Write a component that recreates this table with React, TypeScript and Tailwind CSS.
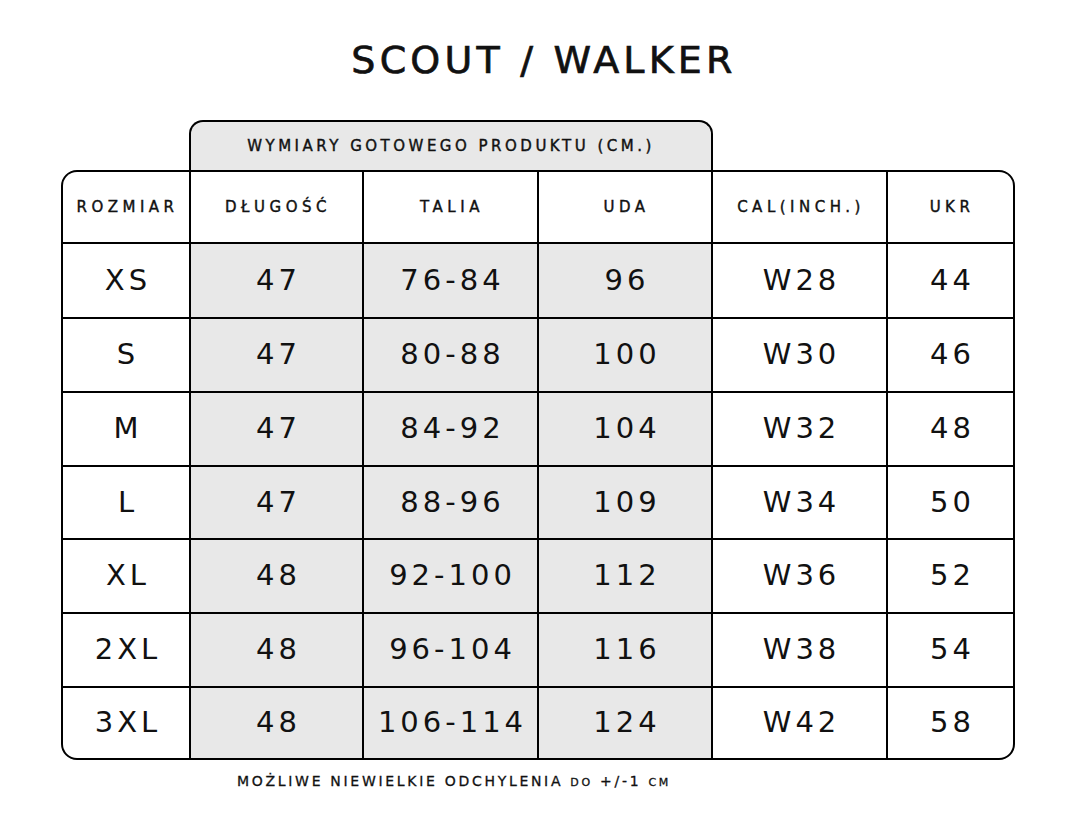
import React from "react";

const rows = [
  ["XS", "47", "76-84", "96", "W28", "44"],
  ["S", "47", "80-88", "100", "W30", "46"],
  ["M", "47", "84-92", "104", "W32", "48"],
  ["L", "47", "88-96", "109", "W34", "50"],
  ["XL", "48", "92-100", "112", "W36", "52"],
  ["2XL", "48", "96-104", "116", "W38", "54"],
  ["3XL", "48", "106-114", "124", "W42", "58"],
];

const headers = ["ROZMIAR", "DŁUGOŚĆ", "TALIA", "UDA", "CAL(INCH.)", "UKR"];

export default function App() {
  return (
    <div
      className="w-[1080px] h-[837px] bg-white text-[#111] relative"
      style={{ fontFamily: '"DejaVu Sans", "Liberation Sans", sans-serif' }}
    >
      <div className="flex flex-col items-start pl-[61px]">
        <div className="w-[954px] flex justify-center pt-[38px] pl-[12px] h-[120px]">
          <h1 className="text-[38px] leading-[44px] tracking-[4.2px] font-normal [-webkit-text-stroke:0.7px_#111]">
            SCOUT / WALKER
          </h1>
        </div>
        <div className="ml-[128px] w-[524px] h-[51px] border-2 border-b-0 border-black rounded-t-[14px] bg-[#e8e8e8] flex items-center justify-center text-[15px] tracking-[3.5px] [-webkit-text-stroke:0.4px_#111]">
          WYMIARY GOTOWEGO PRODUKTU (CM.)
        </div>
        <div className="-mt-px w-[954px] rounded-[16px] border-2 border-black bg-black overflow-hidden grid gap-[2px] grid-cols-[126px_171px_173px_172px_173px_125px] grid-rows-[70px_73px_72px_72px_71px_72px_72px_70px]">
          {headers.map((h) => (
            <div
              key={h}
              className="bg-white flex items-center justify-center pl-[3px] text-[15px] tracking-[4.5px] [-webkit-text-stroke:0.4px_#111]"
            >
              {h}
            </div>
          ))}
          {rows.map((r) =>
            r.map((c, i) => (
              <div
                key={r[0] + i}
                className={`flex items-center justify-center pl-[4px] text-[29px] tracking-[4px] ${
                  i >= 1 && i <= 3 ? "bg-[#e8e8e8]" : "bg-white"
                }`}
              >
                {c}
              </div>
            ))
          )}
        </div>
        <div className="ml-[176px] mt-[11px] text-[14px] tracking-[2.7px] [-webkit-text-stroke:0.3px_#111]">
          MOŻLIWE NIEWIELKIE ODCHYLENIA <span className="text-[11px]">DO</span> +/-1{" "}
          <span className="text-[11px]">CM</span>
        </div>
      </div>
    </div>
  );
}
